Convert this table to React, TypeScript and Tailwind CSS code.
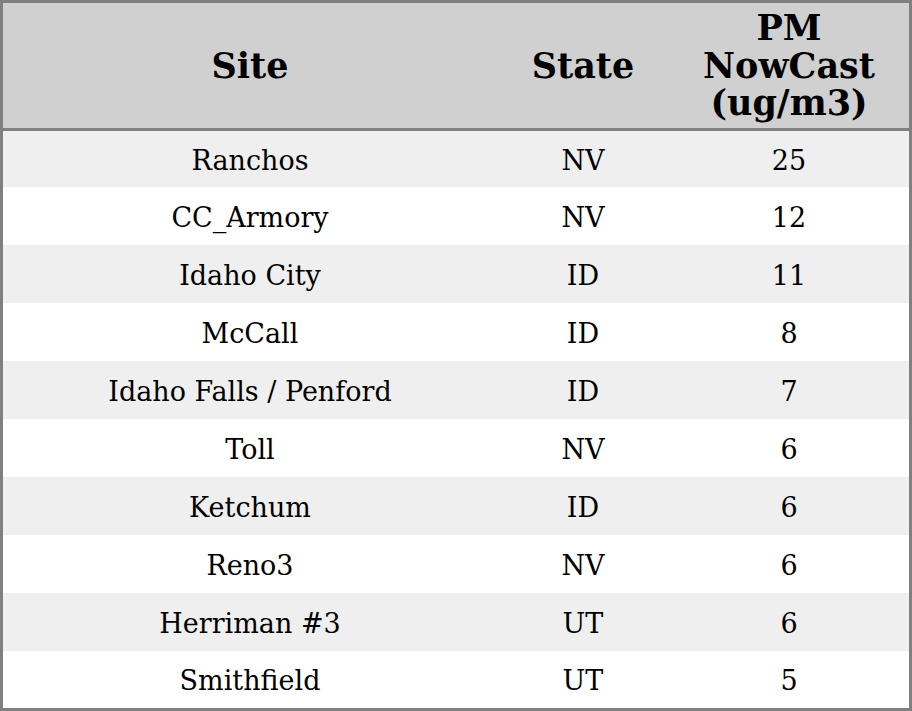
import React from "react";

const rows = [
  { site: "Ranchos", state: "NV", pm: 25, h: "h-[56px]" },
  { site: "CC_Armory", state: "NV", pm: 12, h: "h-[58px]" },
  { site: "Idaho City", state: "ID", pm: 11, h: "h-[58px]" },
  { site: "McCall", state: "ID", pm: 8, h: "h-[58px]" },
  { site: "Idaho Falls / Penford", state: "ID", pm: 7, h: "h-[58px]" },
  { site: "Toll", state: "NV", pm: 6, h: "h-[58px]" },
  { site: "Ketchum", state: "ID", pm: 6, h: "h-[58px]" },
  { site: "Reno3", state: "NV", pm: 6, h: "h-[58px]" },
  { site: "Herriman #3", state: "UT", pm: 6, h: "h-[58px]" },
  { site: "Smithfield", state: "UT", pm: 5, h: "h-[57px]" },
];

const App = () => {
  return (
    <div className="w-[912px] h-[711px] bg-white font-['DejaVu_Serif',serif] text-black">
      <div className="w-full h-full border-[3px] border-[#808080] flex flex-col">
        <div className="flex h-[125px] bg-[#d0d0d0] border-b-[3px] border-[#808080] box-content font-bold text-[35px] leading-[37.5px]">
          <div className="w-[494px] flex items-center justify-center">Site</div>
          <div className="w-[172px] flex items-center justify-center">State</div>
          <div className="w-[240px] flex items-center justify-center text-center">
            PM
            <br />
            NowCast
            <br />
            (ug/m3)
          </div>
        </div>
        {rows.map((r, i) => (
          <div
            key={i}
            className={`flex ${r.h} pt-[4px] text-[27px] ${i % 2 === 0 ? "bg-[#efefef]" : "bg-white"}`}
          >
            <div className="w-[494px] flex items-center justify-center">{r.site}</div>
            <div className="w-[172px] flex items-center justify-center">{r.state}</div>
            <div className="w-[240px] flex items-center justify-center">{r.pm}</div>
          </div>
        ))}
      </div>
    </div>
  );
};

export default App;
